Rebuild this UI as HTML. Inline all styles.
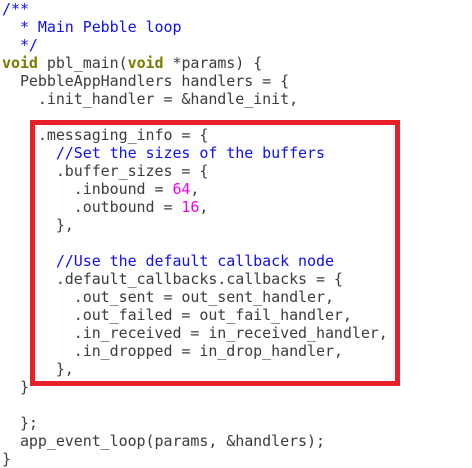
<!DOCTYPE html>
<html><head><style>
html,body{margin:0;padding:0;background:#fff;width:472px;height:465px;overflow:hidden}
pre{position:absolute;left:2px;top:0;margin:0;font-family:"DejaVu Sans Mono","Liberation Mono",monospace;font-size:15px;letter-spacing:-0.06px;line-height:18px;color:#3c3c3c}
.c{color:#1010e8}.k{color:#7a7a00;font-weight:bold}.n{color:#ee00ee}
.box{position:absolute;left:30px;top:120px;width:360px;height:256px;border:5px solid #e8202a}
</style></head><body>
<div class="box"></div>
<pre><span class="c">/**
  * Main Pebble loop
  */</span>
<span class="k">void</span> pbl_main(<span class="k">void</span> *params) {
  PebbleAppHandlers handlers = {
    .init_handler = &amp;handle_init,

    .messaging_info = {
      <span class="c">//Set the sizes of the buffers</span>
      .buffer_sizes = {
        .inbound = <span class="n">64</span>,
        .outbound = <span class="n">16</span>,
      },

      <span class="c">//Use the default callback node</span>
      .default_callbacks.callbacks = {
        .out_sent = out_sent_handler,
        .out_failed = out_fail_handler,
        .in_received = in_received_handler,
        .in_dropped = in_drop_handler,
      },
  }

  };
  app_event_loop(params, &amp;handlers);
}</pre>
</body></html>
